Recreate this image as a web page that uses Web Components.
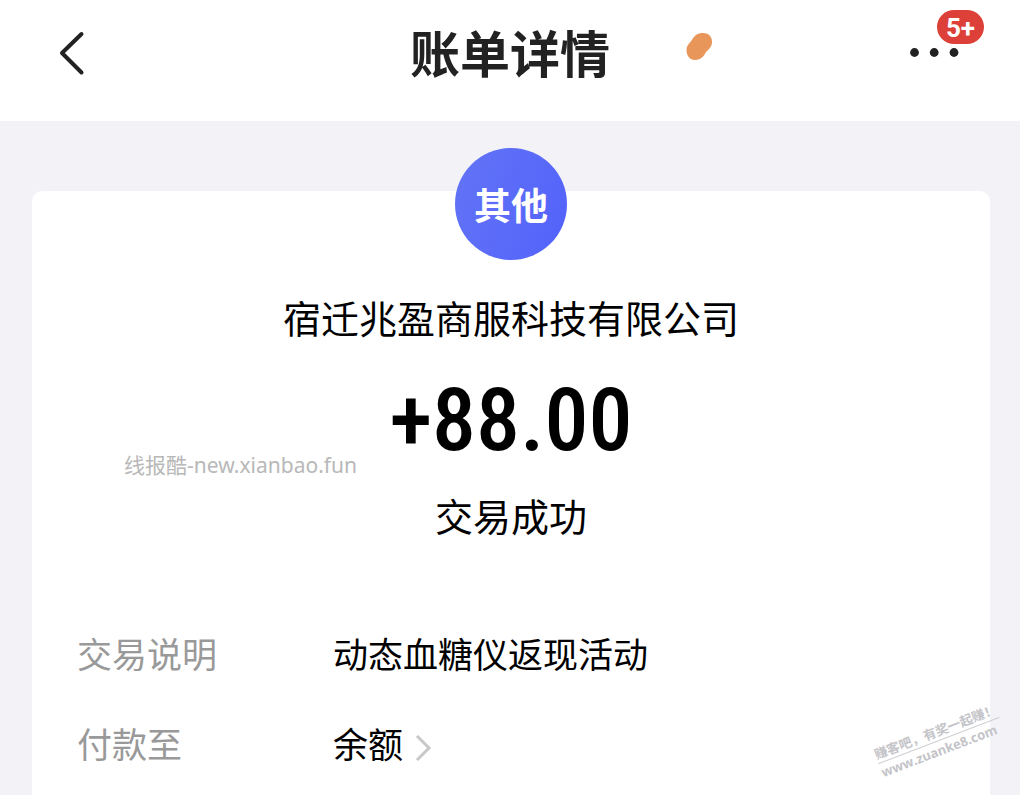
<!DOCTYPE html>
<html lang="zh-CN">
<head>
<meta charset="utf-8">
<meta name="viewport" content="width=device-width, initial-scale=1">
<title>账单详情</title>
<style>
  html {
    background: #f2f2f7;
  }
  body {
    margin: 0;
    color: #000;
    font-family: "Liberation Sans", "Noto Sans CJK SC", sans-serif;
    overflow-x: hidden;
  }
</style>
</head>
<body>
<bill-page>
  <bill-header slot="header" badge="5+">账单详情</bill-header>
  <bill-card category="其他" amount="+88.00">
    <span slot="merchant">宿迁兆盈商服科技有限公司</span>
    <span slot="status">交易成功</span>
    <bill-row label="交易说明">动态血糖仪返现活动</bill-row>
    <bill-row label="付款至" href="#balance">余额</bill-row>
  </bill-card>
  <site-mark slot="marks">线报酷-new.xianbao.fun</site-mark>
  <site-stamp slot="marks" address="www.zuanke8.com">赚客吧，有奖一起赚！</site-stamp>
</bill-page>

<script>
class BillPage extends HTMLElement {
  constructor() {
    super();
    this.attachShadow({ mode: "open" });
    this.shadowRoot.innerHTML = `
    <style>
      :host {
        display: flex;
        flex-direction: column;
        position: relative;
        min-height: 100vh;
        overflow: hidden;
      }
      main {
        flex: 1;
        display: flex;
        flex-direction: column;
        padding: 70px 30px 0 32px;
      }
      ::slotted(bill-card) { flex: 1; }
    </style>
    <slot name="header"></slot>
    <main><slot></slot></main>
    <slot name="marks"></slot>
  `;
  }
}

class BillHeader extends HTMLElement {
  constructor() {
    super();
    this.attachShadow({ mode: "open" });
  }

  connectedCallback() {
    this.shadowRoot.innerHTML = `
    <style>
      :host {
        display: block;
        background: #fff;
        color: #222;
      }
      header {
        display: grid;
        grid-template-columns: 1fr auto 1fr;
        align-items: center;
        padding: 18px 50px 31px;
      }
      h1 {
        margin: 0;
        padding-top: 4px;
        font-size: 50px;
        line-height: 68px;
        font-weight: 700;
      }
      button {
        display: flex;
        position: relative;
        padding: 0;
        border: none;
        background: none;
        color: inherit;
        cursor: pointer;
      }
      .back { justify-self: start; }
      .side {
        display: flex;
        align-items: center;
        justify-content: space-between;
      }
      .bean {
        margin: 0 0 16px 74px;
      }
      /* Posée au-dessus des trois points */
      .badge {
        position: absolute;
        left: 27px;
        bottom: 32px;
        box-sizing: border-box;
        width: 47px;
        height: 34px;
        border-radius: 17px;
        background: #dc4038;
        color: #fff;
        font: 700 26px/36px Roboto, sans-serif;
        text-align: center;
      }
    </style>
    <header>
      <button class="back" type="button" aria-label="返回">
        <svg width="44" height="48" viewBox="0 0 44 48" fill="none" stroke="currentColor" stroke-width="4" stroke-linecap="round" stroke-linejoin="round">
          <path d="M31.500 4 12 23 31.500 42.500" />
        </svg>
      </button>
      <h1><slot></slot></h1>
      <div class="side">
        <svg class="bean" width="30" height="30" viewBox="0 0 30 30" fill="#e8965a" aria-hidden="true">
          <path d="M2.500 19C2.500 14 6 12 8.500 8C11 4 14 2 19 2C25 2 28.500 6 28 12C27.500 16 25 18 22 21C20 25 17 29 11 29C6 29 2.500 25 2.500 19Z" />
        </svg>
        <button class="more" type="button" aria-label="更多">
          <svg width="60" height="44" viewBox="0 0 60 44" fill="currentColor">
            <circle cx="4.500" cy="20.500" r="4.400" />
            <circle cx="24.200" cy="20.500" r="4.400" />
            <circle cx="44" cy="20.500" r="4.400" />
          </svg>
          <span class="badge">${this.getAttribute("badge")}</span>
        </button>
      </div>
    </header>
  `;
  }
}

class BillCard extends HTMLElement {
  constructor() {
    super();
    this.attachShadow({ mode: "open" });
  }

  connectedCallback() {
    this.shadowRoot.innerHTML = `
    <style>
      :host {
        display: block;
        border-radius: 10px 10px 0 0;
        background: #fff;
      }
      .summary {
        display: flex;
        flex-direction: column;
        align-items: center;
      }
      .category {
        display: flex;
        align-items: center;
        justify-content: center;
        width: 112px;
        height: 112px;
        margin-top: -43px;
        border-radius: 50%;
        background: linear-gradient(110deg, #6374f6, #5262fb);
        color: #fff;
        font-size: 37px;
        font-weight: 700;
      }
      .merchant,
      .status {
        font-size: 38px;
        line-height: 56px;
      }
      .merchant { margin-top: 32px; }
      .status { margin-top: 14px; }
      .amount {
        margin-top: 16px;
        font: 500 88px/112px "Roboto Condensed", Roboto, sans-serif;
      }
      .rows {
        display: flex;
        flex-direction: column;
        gap: 38px;
        margin: 0;
        padding: 84px 45px 22px;
      }
    </style>
    <div class="summary">
      <div class="category">${this.getAttribute("category")}</div>
      <div class="merchant"><slot name="merchant"></slot></div>
      <div class="amount">${this.getAttribute("amount")}</div>
      <div class="status"><slot name="status"></slot></div>
    </div>
    <div class="rows"><slot></slot></div>
  `;
  }
}

class BillRow extends HTMLElement {
  constructor() {
    super();
    this.attachShadow({ mode: "open" });
  }

  connectedCallback() {
    const href = this.getAttribute("href");
    this.shadowRoot.innerHTML = `
    <style>
      :host {
        display: block;
        font-size: 35px;
        line-height: 52px;
      }
      dl {
        display: flex;
        margin: 0;
      }
      dt {
        flex: 0 0 256px;
        color: #999;
      }
      dd { margin: 0; }
      a {
        display: flex;
        align-items: center;
        gap: 12px;
        color: inherit;
        text-decoration: none;
      }
      svg { margin-top: 4px; }
    </style>
    <dl>
      <dt>${this.getAttribute("label")}</dt>
      <dd>${href ? this._renderLink(href) : "<slot></slot>"}</dd>
    </dl>
  `;
  }

  _renderLink(href) {
    return `<a href="${href}"><slot></slot>
      <svg width="18" height="30" viewBox="0 0 18 30" fill="none" stroke="#c8c8c8" stroke-width="3">
        <path d="M2 3 14 15 2 27" />
      </svg></a>`;
  }
}

class SiteMark extends HTMLElement {
  constructor() {
    super();
    this.attachShadow({ mode: "open" });
    this.shadowRoot.innerHTML = `
    <style>
      :host {
        position: absolute;
        top: 450px;
        left: 124px;
        color: #b8b8b8;
        font: 21px/30px "Noto Sans", "Noto Sans CJK SC", sans-serif;
        white-space: nowrap;
        pointer-events: none;
      }
    </style>
    <slot></slot>
  `;
  }
}

class SiteStamp extends HTMLElement {
  constructor() {
    super();
    this.attachShadow({ mode: "open" });
  }

  connectedCallback() {
    this.shadowRoot.innerHTML = `
    <style>
      :host {
        position: absolute;
        right: 16px;
        bottom: 36px;
        color: #c4c4c8;
        font: 700 13px/18px "Noto Sans CJK SC", sans-serif;
        white-space: nowrap;
        transform: rotate(-21deg);
        pointer-events: none;
      }
      div { border-bottom: 1px solid #d0d0d4; }
      span {
        display: block;
        font: 700 13px/18px "Open Sans", sans-serif;
      }
    </style>
    <div><slot></slot></div>
    <span>${this.getAttribute("address")}</span>
  `;
  }
}

customElements.define("bill-page", BillPage);
customElements.define("bill-header", BillHeader);
customElements.define("bill-card", BillCard);
customElements.define("bill-row", BillRow);
customElements.define("site-mark", SiteMark);
customElements.define("site-stamp", SiteStamp);
</script>
</body>
</html>
